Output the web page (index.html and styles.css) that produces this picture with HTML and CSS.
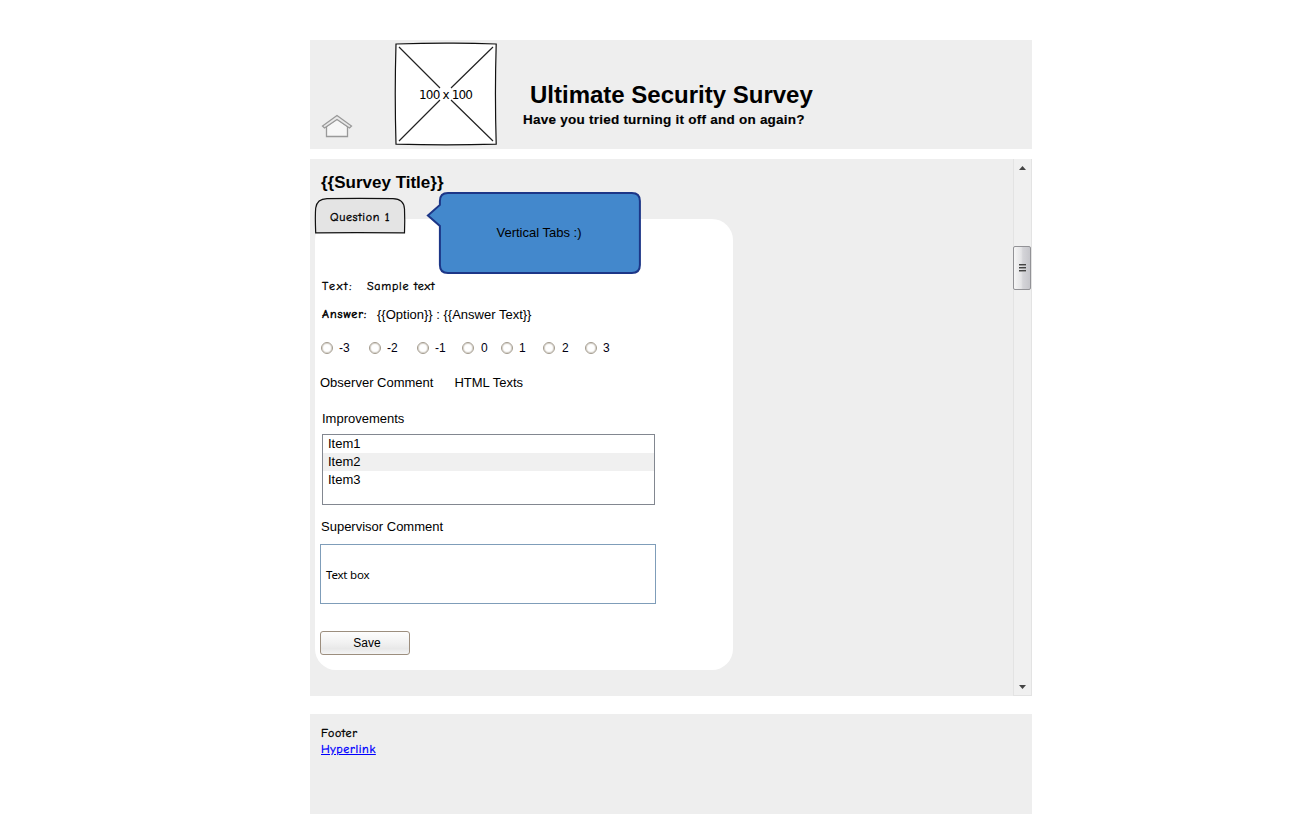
FILE: index.html
```html
<!DOCTYPE html>
<html lang="en">
<head>
<meta charset="utf-8">
<title>Ultimate Security Survey</title>
<link rel="stylesheet" href="styles.css">
</head>
<body>
<div class="page">
  <header class="header">
    <svg class="home" width="32" height="24" viewBox="0 0 32 24">
      <path d="M5.500 12.500V22.500H26.500V12.500L16 5Z" fill="#f6f6f6" stroke="#999" stroke-width="1.300"/>
      <path d="M16 1.500L1.500 12L3.500 14L16 5.500L28.500 14L30.500 12Z" fill="#e8e8e8" stroke="#999" stroke-width="1.300"/>
    </svg>
    <svg class="placeholder" width="104" height="104" viewBox="0 0 104 104">
      <path d="M2 2Q28 1.300 52 1.100T102.200 2Q100.700 52 102.200 102.200Q52 103.700 2 102.200Q.5 52 2 2Z" fill="#fff" stroke="#111" stroke-width="1.200"/>
      <path d="M5 5L46 46M99 5L57 46M46 58L5 99M57 58L99 99" fill="none" stroke="#222" stroke-width="1.200"/>
      <text class="placeholder-text" x="25" y="57" textLength="54">100 x 100</text>
    </svg>
    <div class="titles">
      <h1 class="title">Ultimate Security Survey</h1>
      <p class="subtitle">Have you tried turning it off and on again?</p>
    </div>
  </header>

  <main class="main">
    <section class="content">
      <h2 class="survey-title">{{Survey Title}}</h2>
      <div class="tab">
        <svg class="shape" width="92" height="37" viewBox="0 0 92 37">
          <path d="M1.700 35.800Q1 18 1.700 11Q3 2 13 1.700Q45 1.200 79 1.700Q90 2 90.500 12Q91 25 90.500 35.800Q40 35.300 1.700 35.800Z" fill="#e4e4e4" stroke="#111" stroke-width="1.200"/>
        </svg>
        <span class="tab-label hand">Question 1</span>
      </div>
      <div class="callout">
        <svg class="shape" width="216" height="84" viewBox="0 0 216 84">
          <path d="M22 2H206Q214 2 214 10V74Q214 82 206 82H22Q14 82 14 74V35L2 24.500L14 14V10Q14 2 22 2Z" fill="#4388cc" stroke="#1c3687" stroke-width="2"/>
        </svg>
        <span class="callout-label">Vertical Tabs :)</span>
      </div>
      <form class="panel">
        <div class="row row-text"><span class="hand label-text">Text:</span><span class="hand value-text">Sample text</span></div>
        <div class="row row-answer"><span class="hand label-answer">Answer:</span><span>{{Option}} : {{Answer Text}}</span></div>
        <div class="radios">
          <label class="radio w48"><i class="dot"></i>-3</label>
          <label class="radio w48"><i class="dot"></i>-2</label>
          <label class="radio w45"><i class="dot"></i>-1</label>
          <label class="radio w39"><i class="dot wide"></i>0</label>
          <label class="radio w42"><i class="dot"></i>1</label>
          <label class="radio w42"><i class="dot wide"></i>2</label>
          <label class="radio w42"><i class="dot"></i>3</label>
        </div>
        <div class="row row-observer"><span>Observer Comment</span><span>HTML Texts</span></div>
        <div class="row row-improve">Improvements</div>
        <ul class="list">
          <li class="item">Item1</li>
          <li class="item selected">Item2</li>
          <li class="item">Item3</li>
        </ul>
        <div class="row row-super">Supervisor Comment</div>
        <div class="textbox">Text box</div>
        <button class="save" type="button">Save</button>
      </form>
    </section>
    <div class="scrollbar">
      <svg class="arrow" width="7" height="4" viewBox="0 0 7 4"><path d="M0 4L3.500 0L7 4Z" fill="#444"/></svg>
      <div class="thumb"><i class="grip"></i><i class="grip"></i><i class="grip"></i></div>
      <svg class="arrow" width="7" height="4" viewBox="0 0 7 4"><path d="M0 0L3.500 4L7 0Z" fill="#444"/></svg>
    </div>
  </main>

  <footer class="footer">
    <div class="hand footer-text">Footer</div>
    <a class="hand link" href="#">Hyperlink</a>
  </footer>
</div>
</body>
</html>
```

FILE: styles.css
```css
* { box-sizing: border-box; }
body {
  margin: 0;
  background: #fff;
  color: #000;
  font: 13px/16px "Liberation Sans", Arial, sans-serif;
  overflow: hidden;
}
h1, h2, p, ul { margin: 0; padding: 0; }
.page { width: 722px; margin: 40px 0 0 310px; }
.hand { font-family: "Comic Sans MS", "Comic Neue", "Open Sans", sans-serif; font-size: 12px; letter-spacing: .65px; white-space: nowrap; -webkit-text-stroke: .35px currentColor; }
.header { display: flex; height: 109px; background: #eee; }
.home { margin: 74px 0 0 11px; }
.placeholder { margin: 2px 0 0 41px; }
.placeholder-text { font: 12px "DejaVu Sans", sans-serif; }
.titles { padding: 40px 0 0 25px; }
.title { margin-left: 7px; font-size: 24px; line-height: 30px; white-space: nowrap; }
.subtitle { font-size: 13.5px; letter-spacing: .24px; font-weight: bold; line-height: 20px; white-space: nowrap; -webkit-text-stroke: .15px #000; }

.main { display: flex; height: 537px; margin-top: 10px; background: #eee; }
.content { position: relative; width: 703px; padding: 14px 0 0 5px; }
.survey-title { margin-left: 6px; font-size: 17px; line-height: 20px; }
.tab { position: absolute; left: 4px; top: 38px; width: 92px; height: 37px; }
.shape { display: block; position: absolute; left: 0; top: 0; }
.tab-label { position: absolute; left: 16px; top: 12px; }
.callout { position: absolute; left: 115px; top: 31px; width: 216px; height: 84px; }
.callout .shape { left: .5px; top: .5px; transform: translate(-.1px, -.1px); }
.callout-label { position: absolute; left: 71.500px; top: 35px; white-space: nowrap; }
.panel { width: 418px; height: 451px; margin-top: 26px; padding: 59px 0 0 5px; border-radius: 21px; background: #fff; }
.row { display: flex; height: 16px; white-space: nowrap; }
.row-text { margin-left: 2px; }
.label-text { width: 45px; letter-spacing: 1.700px; }
.value-text { letter-spacing: .75px; }
.row-answer { margin: 13px 0 0 2px; }
.label-answer { width: 55px; letter-spacing: .95px; -webkit-text-stroke-width: .5px; }
.row-answer .hand { margin-top: -1px; }
.radios { display: flex; margin-top: 17px; font-size: 12px; color: #001; }
.radio { display: flex; align-items: center; height: 16px; }
.dot { width: 12px; height: 12px; margin: 0 6px 0 1px; border: 1px solid #a39b8e; border-radius: 50%; background: #fff; box-shadow: inset 0 0 1px 1px #d5d0c8; }
.wide { margin-right: 7px; }
.w48 { width: 48px; }
.w45 { width: 45px; }
.w39 { width: 39px; }
.w42 { width: 42px; }
.row-observer { gap: 21px; margin-top: 19px; }
.row-improve { margin: 20px 0 0 2px; }
.list { width: 333px; height: 71px; margin: 7px 0 0 2px; border: 1px solid #828790; list-style: none; }
.item { height: 18px; padding: 0 5px; line-height: 18px; }
.selected { background: #f0f0f0; }
.row-super { margin: 14px 0 0 1px; }
.textbox { width: 336px; height: 60px; margin-top: 9px; padding: 0 5px; border: 1px solid #7f9db9; font: 11.5px/60px "Noto Sans", sans-serif; letter-spacing: -.2px; }
.save { display: block; width: 90px; height: 24px; margin-top: 27px; padding: 0 0 0 4px; border: 1px solid #9c8e7e; border-radius: 3px; background: linear-gradient(#fdfdfd, #f1f1f1 50%, #e8e8e8 75%, #f4f4f4); color: #000; font: 12px "Liberation Sans", Arial, sans-serif; }

.scrollbar { display: flex; flex-direction: column; align-items: center; width: 19px; padding: 7px 1px 6px 0; border: 1px solid #e3e3e3; border-top-width: 0; background: #f0f0f0; }
.arrow { flex: none; }
.thumb { display: flex; flex-direction: column; align-items: center; justify-content: center; gap: 1px; width: 18px; height: 44px; margin: 76px 0 auto; border: 1px solid #929296; border-radius: 2px; background: linear-gradient(90deg, #f6f6f6, #e4e4e6 45%, #d4d4d8 55%, #c6c6cb); }
.grip { width: 7px; height: 2px; background: linear-gradient(#444 50%, #999 50%); }

.footer { height: 100px; margin-top: 18px; padding: 11px; background: #eee; }
.footer-text, .link { display: block; line-height: 16px; }
.link { width: 54px; color: #00f; }
```
